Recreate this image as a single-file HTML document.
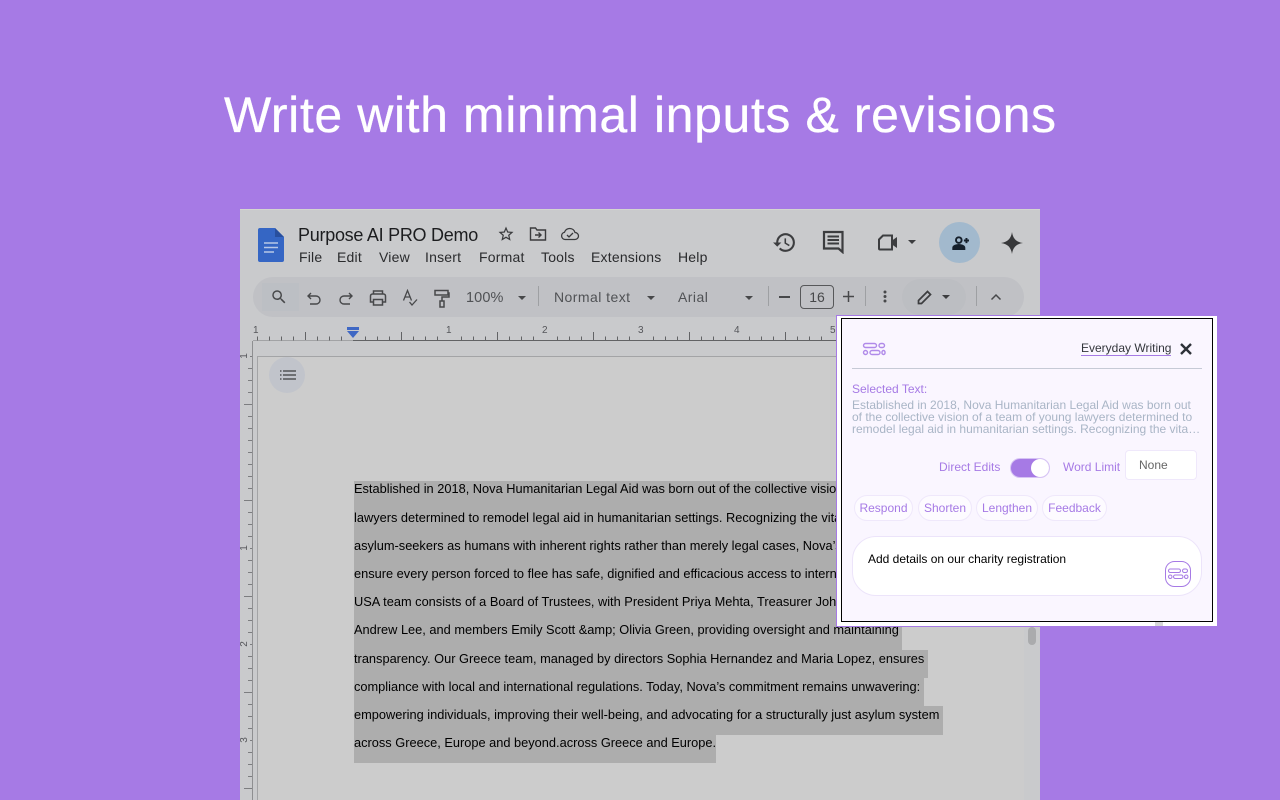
<!DOCTYPE html>
<html><head><meta charset="utf-8"><title>Write with minimal inputs</title>
<style>
html,body{margin:0;padding:0;width:1280px;height:800px;overflow:hidden;background:#a67ae5;font-family:"Liberation Sans",Arial,sans-serif}
div,span,svg{position:absolute;display:block}
.t{white-space:nowrap;line-height:1}
#doc{left:240px;top:209px;width:800px;height:591px;background:#c9cacc;overflow:hidden}
.m{font-size:14px;color:#2a2b2d;top:41px;letter-spacing:.2px}
.ln{left:114px;font-size:12.8px;color:#000;white-space:nowrap;line-height:15px}
.sel{left:114px;background:#adadad}
.tb{color:#505255;font-size:14px;letter-spacing:.45px}
.ch{top:495px;height:24px;border:1px solid #efe8fb;border-radius:13px;background:#fdfbff;color:#a67ae5;font-size:12px;line-height:24px;text-align:center;box-sizing:content-box}
.p{font-size:12px;color:#a67ae5;white-space:nowrap;line-height:14px}
.g{line-height:12px;font-size:12px;color:#a9b5c6;left:852px;white-space:nowrap}
.vn{left:0;width:10px;text-align:center;font-size:10px;line-height:10px;color:#55565a;transform:rotate(-90deg)}
</style></head><body>
<div class="t" style="left:224px;top:87px;font-size:50px;line-height:56px;color:#fff;width:860px;letter-spacing:.6px;-webkit-text-stroke:.3px #fff" id="h">Write with minimal inputs &amp; revisions</div>

<div id="doc">
<div style="left:0;top:0;width:800px;height:1px;background:#d4d6d0"></div>
<!-- docs logo -->
<svg style="left:18px;top:18px" width="26" height="36" viewBox="0 0 26 36"><path d="M2 1h15l9 9v23a2 2 0 0 1-2 2H2a2 2 0 0 1-2-2V3a2 2 0 0 1 2-2z" fill="#3566c4"/><path d="M17 1l9 9h-9z" fill="#284f9e"/><path d="M6 16h14M6 20.500h14M6 25h10" stroke="#b8c8e6" stroke-width="1.600"/></svg>
<div class="t" style="left:58px;top:16px;font-size:18px;line-height:20px;color:#1c1d1f;letter-spacing:-.27px" id="ti">Purpose AI PRO Demo</div>
<svg style="left:257px;top:16px" width="18" height="18" viewBox="0 0 24 24"><path fill="#3a3b3d" d="M22 9.240l-7.190-.62L12 2 9.190 8.630 2 9.240l5.460 4.730L5.820 21 12 17.270 18.180 21l-1.630-7.030L22 9.240zM12 15.400l-3.760 2.270 1-4.280-3.320-2.880 4.380-.38L12 6.100l1.710 4.040 4.380.38-3.320 2.880 1 4.280L12 15.400z"/></svg>
<svg style="left:289px;top:16px" width="18" height="18" viewBox="0 0 18 18" fill="none" stroke="#3a3b3d" stroke-width="1.400"><path d="M1.500 3h5l1.500 2h8.500v10h-15z"/><path d="M6 10h6M9.500 7.500l2.500 2.500-2.500 2.500"/></svg>
<svg style="left:320px;top:16px" width="20" height="18" viewBox="0 0 20 18" fill="none" stroke="#3a3b3d" stroke-width="1.300"><path d="M5 14.500a3.700 3.700 0 0 1-.5-7.300 5.500 5.500 0 0 1 10.500 0.300 3.500 3.500 0 0 1 0 7z"/><path d="M7 10l2 2 4-4"/></svg>
<div class="t m" style="left:59px">File</div><div class="t m" style="left:97px">Edit</div><div class="t m" style="left:139px">View</div><div class="t m" style="left:185px">Insert</div><div class="t m" style="left:239px">Format</div><div class="t m" style="left:301px">Tools</div><div class="t m" style="left:351px">Extensions</div><div class="t m" style="left:438px">Help</div>
<!-- right icons -->
<svg style="left:532px;top:21px" width="25" height="25" viewBox="0 0 24 24"><path fill="#3c3d3f" d="M13 3a9 9 0 0 0-9 9H1l3.890 3.890.07.14L9 12H6c0-3.870 3.130-7 7-7s7 3.130 7 7-3.130 7-7 7c-1.930 0-3.680-.79-4.940-2.060l-1.420 1.420A8.954 8.954 0 0 0 13 21a9 9 0 0 0 0-18zm-1 5v5l4.280 2.540.72-1.210-3.500-2.080V8H12z"/></svg>
<svg style="left:582px;top:21px" width="23" height="24" viewBox="0 0 23 24" fill="none" stroke="#3c3d3f" stroke-width="2.200"><path d="M2 2h18.500v20l-4-3.500H2z"/><path d="M5.500 6.500h11.500M5.500 10h11.500M5.500 13.500h11.500" stroke-width="1.900"/></svg>
<svg style="left:637px;top:25px" width="22" height="18" viewBox="0 0 22 18"><path d="M2 5.500 6 1.500h9v14H3a1 1 0 0 1-1-1z" fill="none" stroke="#3c3d3f" stroke-width="2"/><path d="M15 6.500l5-3.500v11l-5-3.500z" fill="#3c3d3f"/></svg>
<div style="left:668px;top:31px;width:0;height:0;border:4px solid transparent;border-top:4px solid #3c3d3f"></div>
<div style="left:699px;top:13px;width:41px;height:41px;border-radius:50%;background:#a2b9cd"></div>
<svg style="left:711px;top:26px" width="19" height="17" viewBox="0 0 22 20" fill="none" stroke="#16202c" stroke-width="2.300"><circle cx="9" cy="6" r="3.300"/><path d="M2.500 16.500v-1.500c0-2.200 4-3.300 6.500-3.300s6.500 1.100 6.500 3.300v1.500z" fill="#16202c"/><path d="M18 3.500v6M15 6.500h6"/></svg>
<svg style="left:761px;top:23px" width="22" height="22" viewBox="0 0 24 24"><path fill="#37383a" d="M12 0c1 7 4.500 11 12 12-7.500 1-11 5-12 12-1-7-4.500-11-12-12 7.500-1 11-5 12-12z"/></svg>

<!-- toolbar -->
<div style="left:13px;top:68px;width:771px;height:40px;border-radius:20px;background:#c0c1c5"></div>
<div style="left:22px;top:74px;width:37px;height:28px;background:#bcbfc4"></div>
<div style="left:662px;top:70px;width:64px;height:36px;border-radius:18px;background:#bcbec2"></div>
<svg style="left:30px;top:79px" width="18" height="18" viewBox="0 0 24 24"><path fill="#47484a" d="M15.500 14h-.79l-.28-.27A6.471 6.471 0 0 0 16 9.500 6.500 6.500 0 1 0 9.500 16c1.610 0 3.090-.59 4.230-1.570l.27.28v.79l5 4.990L20.490 19l-4.990-5zm-6 0C7.010 14 5 11.990 5 9.500S7.010 5 9.500 5 14 7.010 14 9.500 11.990 14 9.500 14z"/></svg>
<svg style="left:66px;top:82px" width="16" height="16" viewBox="0 0 16 16" fill="none" stroke="#47484a" stroke-width="1.400"><path d="M5 2 2 5l3 3M2 5h8a3.800 3.800 0 0 1 0 8H4"/></svg>
<svg style="left:98px;top:82px" width="16" height="16" viewBox="0 0 16 16" fill="none" stroke="#47484a" stroke-width="1.400"><path d="M11 2l3 3-3 3M14 5H6a3.800 3.800 0 0 0 0 8h6"/></svg>
<svg style="left:129px;top:80px" width="18" height="18" viewBox="0 0 18 18" fill="none" stroke="#47484a" stroke-width="1.500"><path d="M4.500 5V2h9v3M4.500 13H1.500V7a2 2 0 0 1 2-2h11a2 2 0 0 1 2 2v6h-3"/><path d="M4.500 10.500h9V16h-9z"/></svg>
<svg style="left:162px;top:80px" width="17" height="19" viewBox="0 0 17 19" fill="none" stroke="#47484a" stroke-width="1.300"><path d="M1.500 11.500 5.500 1.500l4 10M3 8h5"/><path d="M7.500 13l2.500 3 5-5.500"/></svg>
<svg style="left:194px;top:80px" width="16" height="20" viewBox="0 0 16 20" fill="none" stroke="#47484a" stroke-width="1.500"><path d="M1 1.500h13v4.500H1z"/><path d="M14 4h1v4H8v4"/><path d="M6 12h4v6H6z"/></svg>
<div class="t tb" style="left:226px;top:82px;font-size:14.500px;letter-spacing:.1px">100%</div>
<div style="left:278px;top:87px;width:0;height:0;border:4px solid transparent;border-top:4px solid #47484a"></div>
<div style="left:298px;top:77px;width:1px;height:20px;background:#9ea0a3"></div>
<div class="t tb" style="left:314px;top:81px">Normal text</div>
<div style="left:407px;top:87px;width:0;height:0;border:4px solid transparent;border-top:4px solid #47484a"></div>
<div class="t tb" style="left:438px;top:81px">Arial</div>
<div style="left:505px;top:87px;width:0;height:0;border:4px solid transparent;border-top:4px solid #47484a"></div>
<div style="left:528px;top:77px;width:1px;height:20px;background:#9ea0a3"></div>
<div style="left:539px;top:87px;width:11px;height:1.500px;background:#47484a"></div>
<div style="left:560px;top:76px;width:32px;height:22px;border:1px solid #57585a;border-radius:4px;color:#47484a;font-size:14px;line-height:22px;text-align:center">16</div>
<svg style="left:603px;top:82px" width="11" height="11" viewBox="0 0 11 11"><path d="M5.500 0v11M0 5.500h11" stroke="#47484a" stroke-width="1.500"/></svg>
<div style="left:625px;top:77px;width:1px;height:20px;background:#9ea0a3"></div>
<svg style="left:643px;top:81px" width="4" height="13" viewBox="0 0 4 13"><circle cx="2" cy="2" r="1.500" fill="#47484a"/><circle cx="2" cy="6.500" r="1.500" fill="#47484a"/><circle cx="2" cy="11" r="1.500" fill="#47484a"/></svg>
<svg style="left:677px;top:80px" width="16" height="16" viewBox="0 0 16 16" fill="none" stroke="#3c3d3f" stroke-width="1.700"><path d="M1.500 14.500v-3l9-9 3 3-9 9z"/></svg>
<div style="left:702px;top:86px;width:0;height:0;border:4px solid transparent;border-top:4px solid #3c3d3f"></div>
<div style="left:736px;top:77px;width:1px;height:20px;background:#9ea0a3"></div>
<svg style="left:750px;top:84px" width="12" height="8" viewBox="0 0 12 8" fill="none" stroke="#47484a" stroke-width="1.500"><path d="M1.500 6.500 6 2l4.500 4.500"/></svg>

<!-- ruler -->
<svg style="left:0;top:113px" width="800" height="478" viewBox="0 0 800 478">
<path d="M13 18.500H113" stroke="#a2a3a5"/><path d="M113 18.500H800" stroke="#626365"/>
<path d="M17.500 14.500v4M29.500 14.500v4M41.500 14.500v4M53.500 14.500v4M77.500 14.500v4M89.500 14.500v4M101.500 14.500v4M125.500 14.500v4M137.500 14.500v4M149.500 14.500v4M173.500 14.500v4M185.500 14.500v4M197.500 14.500v4M221.500 14.500v4M233.500 14.500v4M245.500 14.500v4M269.500 14.500v4M281.500 14.500v4M293.500 14.500v4M317.500 14.500v4M329.500 14.500v4M341.500 14.500v4M365.500 14.500v4M377.500 14.500v4M389.500 14.500v4M413.500 14.500v4M425.500 14.500v4M437.500 14.500v4M461.500 14.500v4M473.500 14.500v4M485.500 14.500v4M509.500 14.500v4M521.500 14.500v4M533.500 14.500v4M557.500 14.500v4M569.500 14.500v4M581.500 14.500v4" stroke="#626365"/>
<path d="M65.500 10v8M161.500 10v8M257.500 10v8M353.500 10v8M449.500 10v8M545.500 10v8" stroke="#626365"/>
<path d="M12.500 19V478" stroke="#8e8f91"/><path d="M17.500 34V478" stroke="#a3a4a6"/><path d="M17 34.500H800" stroke="#a3a4a6"/>
<path fill="none" stroke="#7c7d80" d="M10 34.500h2M8 46.500h4M8 58.500h4M8 70.500h4M4 82.500h8M8 94.500h4M8 106.500h4M8 118.500h4M8 130.500h4M8 142.500h4M8 154.500h4M8 166.500h4M4 178.500h8M8 190.500h4M8 202.500h4M8 214.500h4M10 226.500h2M8 238.500h4M8 250.500h4M8 262.500h4M4 274.500h8M8 286.500h4M8 298.500h4M8 310.500h4M10 322.500h2M8 334.500h4M8 346.500h4M8 358.500h4M4 370.500h8M8 382.500h4M8 394.500h4M8 406.500h4M10 418.500h2M8 430.500h4M8 442.500h4M8 454.500h4M4 466.500h8"/>
</svg>
<div class="t" style="left:13px;top:117px;font-size:10px;color:#55565a">1</div>
<div class="t" style="left:206px;top:117px;font-size:10px;color:#55565a">1</div>
<div class="t" style="left:302px;top:117px;font-size:10px;color:#55565a">2</div>
<div class="t" style="left:398px;top:117px;font-size:10px;color:#55565a">3</div>
<div class="t" style="left:494px;top:117px;font-size:10px;color:#55565a">4</div>
<div class="t" style="left:590px;top:117px;font-size:10px;color:#55565a">5</div>
<div class="vn" style="top:142px">1</div>
<div class="vn" style="top:334px">1</div>
<div class="vn" style="top:430px">2</div>
<div class="vn" style="top:526px">3</div>
<div style="left:107px;top:118px;width:12px;height:3px;background:#3f68c4"></div>
<div style="left:107px;top:122px;width:0;height:0;border:6px solid transparent;border-top:7px solid #3f68c4;border-bottom:0"></div>

<!-- page -->
<div style="left:18px;top:148px;width:766px;height:443px;background:#cccccc"></div>
<div style="left:29px;top:148px;width:36px;height:36px;border-radius:50%;background:#c1c4cb"></div>
<svg style="left:40px;top:161px" width="16" height="10" viewBox="0 0 16 10"><path d="M0 1h1.500M0 5h1.500M0 9h1.500M3 1h13M3 5h13M3 9h13" stroke="#3c3d3f" stroke-width="1.300"/></svg>
<div style="left:788px;top:418px;width:8px;height:18px;border-radius:4px;background:#aaabad"></div>

<!-- selection -->
<div class="sel" style="top:271.500px;width:620px;height:141px"></div>
<div class="sel" style="top:412px;width:548px;height:28.500px"></div>
<div class="sel" style="top:440.500px;width:574px;height:28.500px"></div>
<div class="sel" style="top:468.500px;width:570px;height:28.500px"></div>
<div class="sel" style="top:497px;width:589px;height:28.500px"></div>
<div class="sel" style="top:525.500px;width:362px;height:28.500px"></div>

<div class="ln" style="top:272px">Established in 2018, Nova Humanitarian Legal Aid was born out of the collective vision of a team of young</div>
<div class="ln" style="top:301px">lawyers determined to remodel legal aid in humanitarian settings. Recognizing the vital importance of</div>
<div class="ln" style="top:329px">asylum-seekers as humans with inherent rights rather than merely legal cases, Nova’s mission is to</div>
<div class="ln" style="top:357px">ensure every person forced to flee has safe, dignified and efficacious access to international</div>
<div class="ln" style="top:385px">USA team consists of a Board of Trustees, with President Priya Mehta, Treasurer John Doe, Secretary</div>
<div class="ln" style="top:413px">Andrew Lee, and members Emily Scott &amp;amp; Olivia Green, providing oversight and maintaining</div>
<div class="ln" style="top:442px">transparency. Our Greece team, managed by directors Sophia Hernandez and Maria Lopez, ensures</div>
<div class="ln" style="top:470px">compliance with local and international regulations. Today, Nova’s commitment remains unwavering:</div>
<div class="ln" style="top:498px">empowering individuals, improving their well-being, and advocating for a structurally just asylum system</div>
<div class="ln" style="top:526px">across Greece, Europe and beyond.across Greece and Europe.</div>
</div>

<!-- panel -->
<div style="left:836px;top:315px;width:381px;height:312px;box-sizing:border-box;background:#fff;border:1px solid #a67ae5;border-right:0"></div>
<div style="left:1155px;top:622px;width:8px;height:4px;background:#d6d6d8"></div>
<div style="left:841px;top:318px;width:372px;height:304px;box-sizing:border-box;background:#faf6ff;border:1.500px solid #000"></div>
<svg style="left:862px;top:342px" width="24" height="14" viewBox="0 0 24 14" fill="none" stroke="#b08ae9" stroke-width="1.400"><rect x="1.500" y="1.500" width="13" height="4" rx="2"/><rect x="17" y="1.500" width="5.500" height="4" rx="2"/><rect x="1.500" y="8.500" width="4" height="4" rx="2"/><rect x="8" y="8.500" width="10" height="4" rx="2"/><rect x="20" y="8.500" width="3" height="4" rx="1.500"/></svg>
<div class="t" style="left:1081px;top:342px;font-size:12px;line-height:13px;color:#33363c;width:90px;height:13px;text-align:left">Everyday Writing</div>
<div style="left:1081px;top:355px;width:90px;height:1px;background:#a67ae5"></div>
<svg style="left:1180px;top:343px" width="12" height="12" viewBox="0 0 12 12"><path d="M1 1l10 10M11 1l-10 10" stroke="#2d3138" stroke-width="2.400"/></svg>
<div style="left:852px;top:368px;width:350px;height:1px;background:#c6cad6"></div>
<div class="p" style="left:852px;top:382px">Selected Text:</div>
<div class="g" style="top:399px">Established in 2018, Nova Humanitarian Legal Aid was born out</div>
<div class="g" style="top:411px">of the collective vision of a team of young lawyers determined to</div>
<div class="g" style="top:423px">remodel legal aid in humanitarian settings. Recognizing the vita…</div>
<div class="p" style="left:939px;top:460px">Direct Edits</div>
<div style="left:1010px;top:458px;width:40px;height:20px;box-sizing:border-box;border-radius:10px;background:#a67ae5;border:1px solid #d6c3f4"></div>
<div style="left:1031px;top:459px;width:18px;height:18px;border-radius:50%;background:#fff"></div>
<div class="p" style="left:1063px;top:460px">Word Limit</div>
<div style="left:1125px;top:450px;width:72px;height:30px;box-sizing:border-box;border:1px solid #efe8fb;border-radius:4px;background:#fff"></div>
<div class="t" style="left:1139px;top:458px;font-size:12px;line-height:14px;color:#666">None</div>
<div class="ch" style="left:854px;width:57px">Respond</div>
<div class="ch" style="left:918px;width:52px">Shorten</div>
<div class="ch" style="left:976px;width:60px">Lengthen</div>
<div class="ch" style="left:1042px;width:63px">Feedback</div>
<div style="left:852px;top:536px;width:350px;height:60px;box-sizing:border-box;border:1px solid #ece4fa;border-radius:24px;background:#fff"></div>
<div class="t" style="left:868px;top:552px;font-size:12px;line-height:14px;color:#000">Add details on our charity registration</div>
<svg style="left:1165px;top:561px" width="26" height="26" viewBox="0 0 26 26" fill="none" stroke="#a67ae5" stroke-width="1"><rect x=".5" y=".5" width="25" height="25" rx="9"/><rect x="3.500" y="8" width="12" height="3.500" rx="1.700"/><rect x="17.500" y="8" width="5" height="3.500" rx="1.700"/><rect x="3.500" y="14" width="3.500" height="3.500" rx="1.700"/><rect x="8.500" y="14" width="9.500" height="3.500" rx="1.700"/><rect x="19.500" y="14" width="3.500" height="3.500" rx="1.700"/></svg>
</body></html>
